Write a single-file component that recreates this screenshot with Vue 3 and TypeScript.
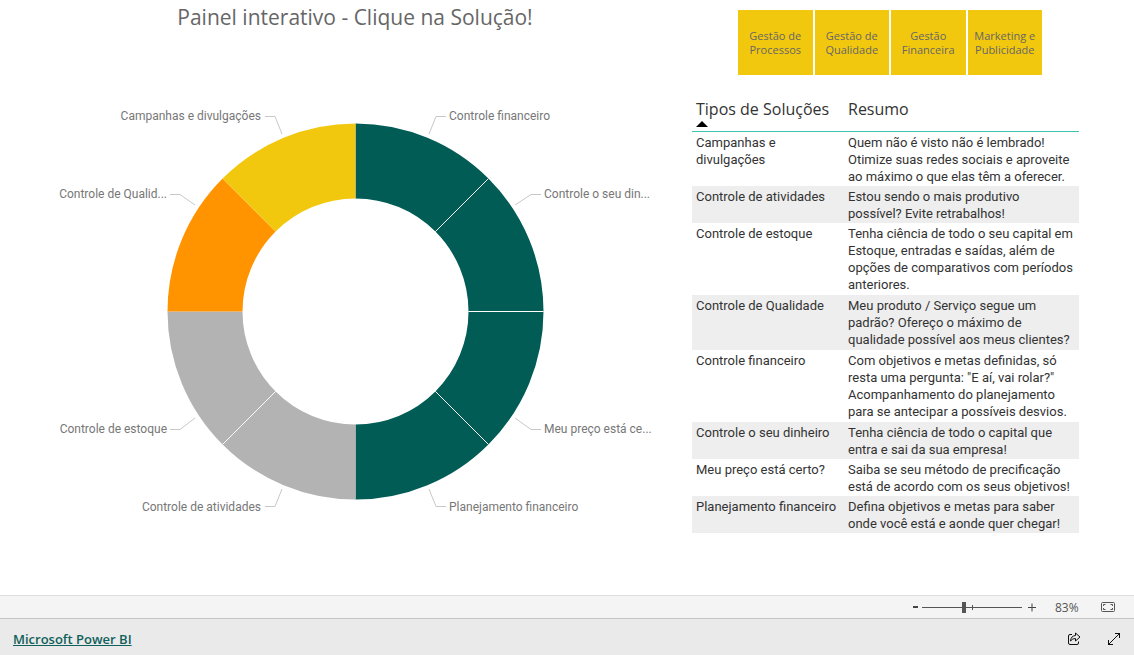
<script setup lang="ts">
import { ref } from 'vue'

interface Slice {
  label: string
  color: string
  x: number
  y: number
  anchor: 'start' | 'end'
  leader: string
}

interface Solution {
  name: string
  summary: string
  roomy?: boolean
}

const CX = 355.5
const CY = 311.5
const OUTER = 188
const INNER = 113

const slices: Slice[] = [
  { label: 'Controle financeiro', color: '#015c55', x: 449, y: 120, anchor: 'start', leader: '429,134 436,116.5 446,116.5' },
  { label: 'Controle o seu din...', color: '#015c55', x: 544, y: 198, anchor: 'start', leader: '515,205 531,194.5 541,194.5' },
  { label: 'Meu preço está ce...', color: '#015c55', x: 544, y: 433, anchor: 'start', leader: '515,418 531,429.5 541,429.5' },
  { label: 'Planejamento financeiro', color: '#015c55', x: 449, y: 511, anchor: 'start', leader: '429,489 436,506.5 446,506.5' },
  { label: 'Controle de atividades', color: '#b3b3b3', x: 261, y: 511, anchor: 'end', leader: '282,489 275,506.5 265,506.5' },
  { label: 'Controle de estoque', color: '#b3b3b3', x: 167, y: 433, anchor: 'end', leader: '195,418 180,429.5 170,429.5' },
  { label: 'Controle de Qualid...', color: '#ff9400', x: 167, y: 198, anchor: 'end', leader: '195,205 180,194.5 170,194.5' },
  { label: 'Campanhas e divulgações', color: '#f2c80f', x: 261, y: 120, anchor: 'end', leader: '282,134 275,116.5 265,116.5' },
]

function point(radius: number, index: number): string {
  const angle = (index * Math.PI) / 4
  return `${(CX + radius * Math.sin(angle)).toFixed(2)} ${(CY - radius * Math.cos(angle)).toFixed(2)}`
}

function arc(i: number): string {
  return `M${point(OUTER, i)}A${OUTER} ${OUTER} 0 0 1 ${point(OUTER, i + 1)}L${point(INNER, i + 1)}A${INNER} ${INNER} 0 0 0 ${point(INNER, i)}Z`
}

function divider(i: number): string {
  return `M${point(INNER, i)}L${point(OUTER, i)}`
}

const dividers = [1, 2, 3, 5]

const areas = ['Gestão de\nProcessos', 'Gestão de\nQualidade', 'Gestão\nFinanceira', 'Marketing e\nPublicidade']

const solutions: Solution[] = [
  { name: 'Campanhas e\ndivulgações', summary: 'Quem não é visto não é lembrado!\nOtimize suas redes sociais e aproveite\nao máximo o que elas têm a oferecer.' },
  { name: 'Controle de atividades', summary: 'Estou sendo o mais produtivo\npossível? Evite retrabalhos!' },
  { name: 'Controle de estoque', summary: 'Tenha ciência de todo o seu capital em\nEstoque, entradas e saídas, além de\nopções de comparativos com períodos\nanteriores.', roomy: true },
  { name: 'Controle de Qualidade', summary: 'Meu produto / Serviço segue um\npadrão? Ofereço o máximo de\nqualidade possível aos meus clientes?', roomy: true },
  { name: 'Controle financeiro', summary: 'Com objetivos e metas definidas, só\nresta uma pergunta: "E aí, vai rolar?"\nAcompanhamento do planejamento\npara se antecipar a possíveis desvios.', roomy: true },
  { name: 'Controle o seu dinheiro', summary: 'Tenha ciência de todo o capital que\nentra e sai da sua empresa!' },
  { name: 'Meu preço está certo?', summary: 'Saiba se seu método de precificação\nestá de acordo com os seus objetivos!' },
  { name: 'Planejamento financeiro', summary: 'Defina objetivos e metas para saber\nonde você está e aonde quer chegar!' },
]

const zoom = ref(83)
</script>

<template>
  <div class="page">
    <main class="report">
      <section class="chart">
        <h1>Painel interativo - Clique na Solução!</h1>
        <svg class="donut" viewBox="0 40 692 540" role="img" aria-label="Soluções">
          <path v-for="(s, i) in slices" :key="s.label" :d="arc(i)" :fill="s.color" />
          <path v-for="d in dividers" :key="d" :d="divider(d)" class="divider" />
          <g v-for="s in slices" :key="s.label">
            <polyline :points="s.leader" class="leader" />
            <text :x="s.x" :y="s.y" :text-anchor="s.anchor">{{ s.label }}</text>
          </g>
        </svg>
      </section>
      <section class="details">
        <div class="areas">
          <button v-for="a in areas" :key="a" type="button">{{ a }}</button>
        </div>
        <table>
          <thead>
            <tr>
              <th scope="col" aria-sort="ascending">
                Tipos de Soluções
                <svg class="sort" viewBox="0 0 12 6" aria-hidden="true"><path d="M0 6L6 0L12 6Z" /></svg>
              </th>
              <th scope="col">Resumo</th>
            </tr>
          </thead>
          <tbody>
            <tr v-for="s in solutions" :key="s.name" :class="{ roomy: s.roomy }">
              <td>{{ s.name }}</td>
              <td>{{ s.summary }}</td>
            </tr>
          </tbody>
        </table>
      </section>
    </main>
    <div class="zoombar">
      <button type="button" class="step" aria-label="Reduzir">
        <svg width="5" height="12" viewBox="0 0 5 12"><path d="M0 6H5" stroke="#444" stroke-width="2" /></svg>
      </button>
      <div class="slider">
        <input v-model.number="zoom" type="range" min="0" max="200" aria-label="Zoom" />
      </div>
      <button type="button" class="step" aria-label="Ampliar">
        <svg width="8" height="12" viewBox="0 0 8 12"><path d="M0 6.5H8M4 2.5V10.5" stroke="#444" /></svg>
      </button>
      <output>{{ zoom }}%</output>
      <button type="button" class="fit" aria-label="Ajustar à página">
        <svg width="14" height="10" viewBox="0 0 14 10" fill="none" stroke="#555">
          <rect x="0.5" y="0.5" width="13" height="9" rx="1" />
          <path d="M2.5 4V2.5H4.5M9.5 2.5H11.5V4M11.5 6V7.5H9.5M4.5 7.5H2.5V6" />
        </svg>
      </button>
    </div>
    <footer>
      <a href="#">Microsoft Power BI</a>
      <button type="button" class="share" aria-label="Compartilhar">
        <svg width="14" height="14" viewBox="0 0 14 14" fill="none" stroke="#111">
          <path d="M5 2.5H3Q1.500 2.500 1.500 4V11Q1.500 12.500 3 12.500H10Q11.500 12.500 11.500 11V9.500" />
          <path d="M8.500 1L13 5L8.500 9V6.500Q5.500 6.300 3.500 9Q4 3.800 8.500 3.500Z" stroke-linejoin="round" />
        </svg>
      </button>
      <button type="button" aria-label="Tela cheia">
        <svg width="14" height="14" viewBox="0 0 14 14" fill="none" stroke="#111">
          <path d="M1 13L13 1M8 1.500H12.500V6M1.500 8V12.500H6" />
        </svg>
      </button>
    </footer>
  </div>
</template>

<style>
body {
  margin: 0;
}
</style>

<style scoped>
.page {
  display: flex;
  flex-direction: column;
  min-height: 100vh;
  background: #fff;
  color: #333;
  font-family: "Open Sans", "Noto Sans", sans-serif;
}

button {
  border: 0;
  padding: 0;
  background: none;
  font: inherit;
  color: inherit;
}

svg {
  display: block;
}

.report {
  flex: 1;
  display: grid;
  grid-template-columns: minmax(0, 692fr) minmax(0, 387fr);
  padding-right: 55px;
}

h1 {
  margin: 0;
  padding: 2px 0 8px 18px;
  font-size: 21px;
  font-weight: 400;
  line-height: 30px;
  text-align: center;
  color: #666;
}

.donut {
  width: 100%;
}

.divider {
  stroke: #fff;
}

.leader {
  fill: none;
  stroke: #c8c8c8;
}

.donut text {
  font-family: Roboto, sans-serif;
  font-size: 12px;
  fill: #777;
}

.details {
  padding-top: 10px;
}

.areas {
  display: grid;
  grid-template-columns: repeat(4, 1fr);
  gap: 2px;
  margin: 0 37px 0 46px;
}

.areas button {
  height: 65px;
  background: #f2c80f;
  font-size: 11px;
  line-height: 14px;
  white-space: pre-line;
  color: #666;
}

table {
  width: 100%;
  margin-top: 22px;
  border-collapse: separate;
  border-spacing: 0;
  table-layout: fixed;
}

th {
  height: 34px;
  padding: 0 0 0 4px;
  border-bottom: 1px solid #3fc4b2;
  font-size: 16px;
  font-weight: 400;
  line-height: 24px;
  text-align: left;
  vertical-align: top;
  white-space: nowrap;
}

th:first-child {
  width: 148px;
}

.sort {
  width: 12px;
  height: 6px;
}

td {
  padding: 2px 0 1px 4px;
  font-family: Roboto, sans-serif;
  font-size: 13px;
  line-height: 17px;
  vertical-align: top;
  white-space: pre;
}

.roomy td {
  padding-bottom: 2px;
}

tbody tr:nth-child(even) {
  background: #eee;
}

.zoombar {
  display: flex;
  align-items: center;
  justify-content: flex-end;
  height: 22px;
  padding-right: 19px;
  border-top: 1px solid #dedede;
  background: #f4f4f4;
  font-size: 12px;
  color: #555;
}

.slider {
  display: flex;
  width: 100px;
  margin: 0 6px 0 4px;
  background: linear-gradient(#555, #555) 50px 50% / 1px 5px no-repeat;
}

.slider input {
  width: 100%;
  height: 12px;
  margin: 0;
  appearance: none;
  background: linear-gradient(#555, #555) 0 50% / 100% 1px no-repeat;
}

.slider input::-webkit-slider-thumb {
  appearance: none;
  width: 4px;
  height: 11px;
  background: #555;
}

output {
  width: 24px;
  margin: 0 22px 0 19px;
}

footer {
  display: flex;
  align-items: center;
  height: 37px;
  padding: 3px 13px 0;
  box-sizing: border-box;
  border-top: 1px solid #c4c4c4;
  background: #eaeaea;
}

footer a {
  margin-right: auto;
  font-size: 13px;
  font-weight: 600;
  color: #0f615b;
}

.share {
  margin-right: 26px;
}
</style>
